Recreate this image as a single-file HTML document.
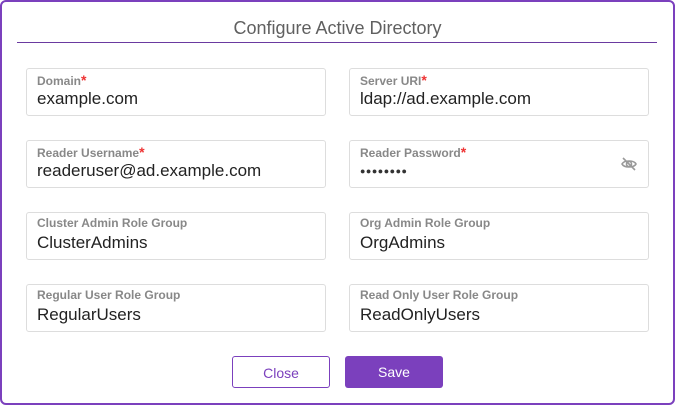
<!DOCTYPE html><html><head><style>
*{box-sizing:border-box;margin:0;padding:0}
body{width:675px;height:405px;overflow:hidden;background:#fff;font-family:"Liberation Sans",sans-serif}
.frame{position:absolute;left:0;top:0;width:675px;height:405px;border:2px solid #7b40bd;border-radius:6px}
.title{position:absolute;left:0;width:675px;top:18px;text-align:center;font-size:18px;color:#606060}
.line{position:absolute;left:17px;width:640px;top:42px;height:1px;background:#6a3aa0}
.f{position:absolute;width:300px;height:48px;border:1px solid #ddd;border-radius:3px}
.f .l{position:absolute;left:10px;top:3px;font-size:12px;font-weight:bold;color:#888}
.f .l b{color:#e33;font-size:14px}
.f .v{position:absolute;left:10px;top:20px;font-size:17px;color:#222}
.btn{position:absolute;top:356px;width:98px;height:32px;border-radius:3px;font-size:14px;text-align:center;line-height:32px}
</style></head><body>
<div class="frame"></div>
<div class="title">Configure Active Directory</div>
<div class="line"></div>
<div class="f" style="left:26px;top:68px"><div class="l">Domain<b>*</b></div><div class="v">example.com</div></div>
<div class="f" style="left:349px;top:68px"><div class="l">Server URI<b>*</b></div><div class="v">ldap://ad.example.com</div></div>
<div class="f" style="left:26px;top:140px"><div class="l">Reader Username<b>*</b></div><div class="v">readeruser@ad.example.com</div></div>
<div class="f" style="left:349px;top:140px"><div class="l">Reader Password<b>*</b></div><div class="v" style="font-size:9px;top:25px;letter-spacing:0.5px;color:#333">●●●●●●●●</div>
<svg style="position:absolute;left:270px;top:14px" width="18" height="18" viewBox="0 0 18 18" fill="none" stroke="#999" stroke-width="1.6"><path d="M2 9c2-4 12-4 14 0c-2 4-12 4-14 0z"/><circle cx="9" cy="9" r="2.5"/><path d="M3 3l12 12"/></svg></div>
<div class="f" style="left:26px;top:212px"><div class="l">Cluster Admin Role Group</div><div class="v">ClusterAdmins</div></div>
<div class="f" style="left:349px;top:212px"><div class="l">Org Admin Role Group</div><div class="v">OrgAdmins</div></div>
<div class="f" style="left:26px;top:284px"><div class="l">Regular User Role Group</div><div class="v">RegularUsers</div></div>
<div class="f" style="left:349px;top:284px"><div class="l">Read Only User Role Group</div><div class="v">ReadOnlyUsers</div></div>
<div class="btn" style="left:232px;border:1px solid #7b40bd;color:#7b40bd;background:#fff">Close</div>
<div class="btn" style="left:345px;background:#7b40bd;color:#fff">Save</div>
</body></html>
